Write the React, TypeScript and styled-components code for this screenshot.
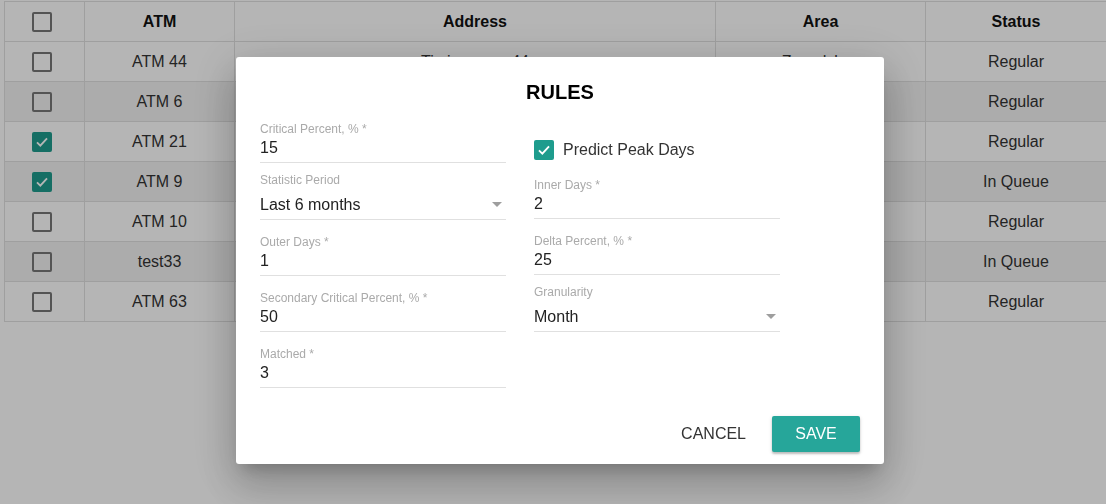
import React from 'react'
import styled, {createGlobalStyle} from 'styled-components'

type Row = { atm: string; address: string; area: string; status: string; checked: boolean }

const rows: Row[] = [
    {atm: 'ATM 44', address: 'Timiryazeva 44', area: 'Zavodskoy', status: 'Regular', checked: false},
    {atm: 'ATM 6', address: 'Lenina 6', area: 'Central', status: 'Regular', checked: false},
    {atm: 'ATM 21', address: 'Gagarina 21', area: 'Sovetsky', status: 'Regular', checked: true},
    {atm: 'ATM 9', address: 'Pushkina 9', area: 'Central', status: 'In Queue', checked: true},
    {atm: 'ATM 10', address: 'Mira 10', area: 'Zavodskoy', status: 'Regular', checked: false},
    {atm: 'test33', address: 'test', area: 'test', status: 'In Queue', checked: false},
    {atm: 'ATM 63', address: 'Kirova 63', area: 'Sovetsky', status: 'Regular', checked: false},
]

const FONT = '"Liberation Sans", Arial, sans-serif'

const Check = ({checked}: { checked: boolean }) => (
    <CheckboxL $checked={checked}>
        {checked && (
            <svg width="16" height="16" viewBox="0 0 24 24">
                <path d="M4.5 12.5 L9.5 17.5 L19.5 6.5" fill="none" stroke="#fff" strokeWidth="2.8"/>
            </svg>
        )}
    </CheckboxL>
)

const Arrow = () => (
    <ArrowL viewBox="0 0 10 5">
        <path d="M0 0 L10 0 L5 5 Z" fill="#9e9e9e"/>
    </ArrowL>
)

const Field = ({label, value, select}: { label: string; value: string; select?: boolean }) => (
    <FieldL $select={select}>
        <LabelL>{label}</LabelL>
        <ValueL $select={select}>
            {value}
            {select && <Arrow/>}
        </ValueL>
    </FieldL>
)

export default function App() {
    return (
        <>
            <GlobalStyle/>
            <TableL>
                <colgroup>
                    <col style={{width: 80}}/>
                    <col style={{width: 150}}/>
                    <col style={{width: 481}}/>
                    <col style={{width: 210}}/>
                    <col/>
                </colgroup>
                <thead>
                <tr>
                    <ThL><CheckCellL><Check checked={false}/></CheckCellL></ThL>
                    <ThL>ATM</ThL>
                    <ThL>Address</ThL>
                    <ThL>Area</ThL>
                    <ThL>Status</ThL>
                </tr>
                </thead>
                <tbody>
                {rows.map((r, i) => (
                    <TrL key={i} $odd={i % 2 === 1}>
                        <TdL><CheckCellL><Check checked={r.checked}/></CheckCellL></TdL>
                        <TdL>{r.atm}</TdL>
                        <TdL>{r.address}</TdL>
                        <TdL>{r.area}</TdL>
                        <TdL>{r.status}</TdL>
                    </TrL>
                ))}
                </tbody>
            </TableL>

            <OverlayL>
                <DialogL>
                    <TitleL>RULES</TitleL>
                    <ColumnsL>
                        <ColumnL>
                            <Field label="Critical Percent, % *" value="15"/>
                            <Field label="Statistic Period" value="Last 6 months" select/>
                            <Field label="Outer Days *" value="1"/>
                            <Field label="Secondary Critical Percent, % *" value="50"/>
                            <Field label="Matched *" value="3"/>
                        </ColumnL>
                        <ColumnL>
                            <PeakRowL>
                                <Check checked/>
                                <span>Predict Peak Days</span>
                            </PeakRowL>
                            <Field label="Inner Days *" value="2"/>
                            <Field label="Delta Percent, % *" value="25"/>
                            <Field label="Granularity" value="Month" select/>
                        </ColumnL>
                    </ColumnsL>
                    <FooterL>
                        <ButtonL>Cancel</ButtonL>
                        <ButtonL $primary>Save</ButtonL>
                    </FooterL>
                </DialogL>
            </OverlayL>
        </>
    )
}

// Styles
const GlobalStyle = createGlobalStyle`
  html, body {
    margin: 0;
    padding: 0;
    background: #fff;
    font-family: ${FONT};
    color: #333;
    overflow: hidden;
  }
`

const TableL = styled.table`
  border-collapse: collapse;
  table-layout: fixed;
  width: 1103px;
  margin: 1px 0 0 4px;
  font-size: 16px;
`

const ThL = styled.th`
  height: 39px;
  padding: 0;
  border: 1px solid #e0e0e0;
  font-weight: 700;
  color: #111;
  text-align: center;
`

const TrL = styled.tr<{ $odd: boolean }>`
  background: ${({$odd}) => ($odd ? '#f2f2f2' : '#fff')};
`

const TdL = styled.td`
  height: 39px;
  padding: 0;
  border: 1px solid #e0e0e0;
  text-align: center;
  color: #333;
`

const CheckCellL = styled.div`
  display: flex;
  justify-content: flex-start;
  padding-left: 27px;
`

const CheckboxL = styled.div<{ $checked: boolean }>`
  box-sizing: border-box;
  width: 20px;
  height: 20px;
  border-radius: 2px;
  display: flex;
  align-items: center;
  justify-content: center;
  flex-shrink: 0;
  background: ${({$checked}) => ($checked ? '#1e9c8d' : 'transparent')};
  border: ${({$checked}) => ($checked ? 'none' : '2px solid #777')};
`

const OverlayL = styled.div`
  position: fixed;
  inset: 0;
  background: rgba(0, 0, 0, 0.29);
  display: flex;
  align-items: flex-start;
  padding: 57px 0 0 236px;
`

const DialogL = styled.div`
  box-sizing: border-box;
  width: 648px;
  height: 407px;
  background: #fff;
  border-radius: 3px;
  padding: 23px 24px 12px;
  display: flex;
  flex-direction: column;
  box-shadow: 0 11px 15px -7px rgba(0, 0, 0, 0.2),
  0 24px 38px 3px rgba(0, 0, 0, 0.14),
  0 9px 46px 8px rgba(0, 0, 0, 0.12);
`

const TitleL = styled.h2`
  margin: 0;
  font-size: 20px;
  line-height: 24px;
  font-weight: 700;
  text-align: center;
  color: #000;
`

const ColumnsL = styled.div`
  display: flex;
  gap: 28px;
  margin-top: 18px;
`

const ColumnL = styled.div`
  width: 246px;
  display: flex;
  flex-direction: column;
  gap: 15px;
`

const FieldL = styled.div<{ $select?: boolean }>`
  display: flex;
  flex-direction: column;
  border-bottom: 1px solid #e0e0e0;
  margin-top: ${({$select}) => ($select ? '-5px' : '0')};
`

const LabelL = styled.label`
  font-size: 12px;
  line-height: 14px;
  color: #aaa;
`

const ValueL = styled.div<{ $select?: boolean }>`
  display: flex;
  align-items: center;
  justify-content: space-between;
  font-size: 16px;
  line-height: 19px;
  color: #222;
  margin-top: ${({$select}) => ($select ? '8px' : '2px')};
  padding-bottom: 5px;
`

const ArrowL = styled.svg`
  width: 10px;
  height: 5px;
  margin-right: 4px;
`

const PeakRowL = styled.div`
  display: flex;
  align-items: center;
  gap: 9px;
  padding: 18px 0 3px;
  font-size: 16px;
  line-height: 20px;
  color: #333;
`

const FooterL = styled.div`
  margin-top: auto;
  display: flex;
  justify-content: flex-end;
  gap: 10px;
`

const ButtonL = styled.button<{ $primary?: boolean }>`
  height: 36px;
  min-width: 88px;
  padding: 0 16px;
  border: none;
  border-radius: 2px;
  font-family: ${FONT};
  font-size: 16px;
  text-transform: uppercase;
  cursor: pointer;
  background: ${({$primary}) => ($primary ? '#26a69a' : 'transparent')};
  color: ${({$primary}) => ($primary ? '#fff' : '#333')};
  box-shadow: ${({$primary}) => ($primary ? '0 2px 2px rgba(0,0,0,0.2), 0 1px 4px rgba(0,0,0,0.12)' : 'none')};
`
